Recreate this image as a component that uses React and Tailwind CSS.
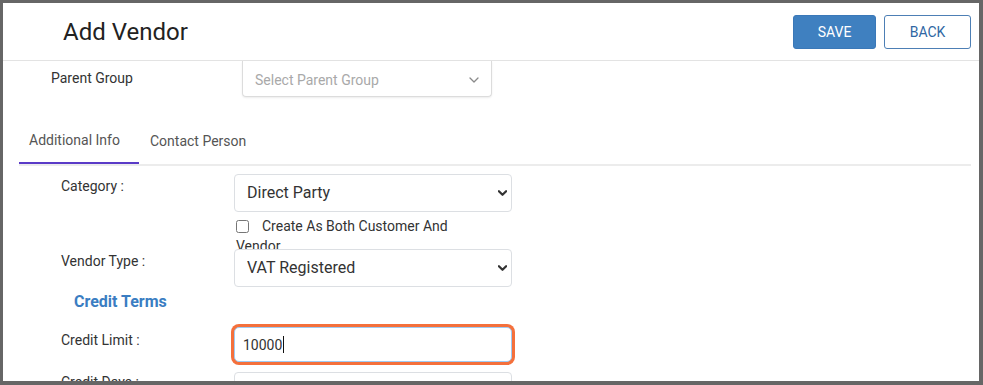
import React from 'react';

// ── Small pieces ────────────────────────────────────────────
function Chevron({ className, strokeWidth = 2.5 }) {
  return (
    <svg
      className={className}
      viewBox="0 0 10 6"
      fill="none"
      stroke="currentColor"
      strokeWidth={strokeWidth}
      strokeLinecap="round"
      strokeLinejoin="round"
    >
      <polyline points="1 1 5 5 9 1" />
    </svg>
  );
}

function SelectField({ value, options }) {
  return (
    <div className="relative w-[278px] h-[38px]">
      <select
        defaultValue={value}
        className="appearance-none w-full h-full rounded-[4px] border border-[#dcdfe3] bg-white pl-[12px] pr-[28px] text-[16px] text-[#333] outline-none"
      >
        {options.map((o) => (
          <option key={o}>{o}</option>
        ))}
      </select>
      <Chevron className="pointer-events-none absolute right-[5px] top-[16px] w-[9px] h-[6px] text-[#333]" />
    </div>
  );
}

function Row({ label, labelClass = 'pt-[2px]', children, className = '' }) {
  return (
    <div className={`flex items-start ${className}`}>
      <div className={`w-[173px] text-sm leading-[20px] text-[#333] ${labelClass}`}>{label}</div>
      {children}
    </div>
  );
}

// ── Page ────────────────────────────────────────────────────
export default function App() {
  return (
    <div className="w-[983px] h-[385px] overflow-hidden bg-[#666] pt-[3px] pl-[3px] pr-[4px] pb-[4px]">
      <div className="h-full overflow-hidden bg-white font-['Roboto',sans-serif]">
        {/* Header */}
        <div className="flex h-[58px] items-center justify-between border-b border-[#e3e3e3] pl-[60px] pr-[8px]">
          <h1 className="text-[24px] leading-none text-[#222]">Add Vendor</h1>
          <div className="flex gap-[8px]">
            <button className="h-[34px] w-[83px] rounded-[3px] border border-[#3a78b8] bg-[#3f80c0] text-sm text-white">
              SAVE
            </button>
            <button className="h-[34px] w-[87px] rounded-[3px] border border-[#4d7fb5] bg-white text-sm text-[#2f67a3]">
              BACK
            </button>
          </div>
        </div>

        {/* Parent group */}
        <div className="flex items-start pl-[48px]">
          <div className="w-[191px] pt-[7px] text-sm leading-[20px] text-[#333]">Parent Group</div>
          <div className="flex h-[36px] w-[250px] items-center justify-between rounded-b-[4px] border border-t-0 border-[#dcdcdc] pl-[12px] pr-[12px] pt-[2px] shadow-[0_1px_2px_rgba(0,0,0,0.08)]">
            <span className="text-sm text-[#a9a9a9]">Select Parent Group</span>
            <Chevron className="w-[10px] h-[6px] text-[#8a8a8a]" strokeWidth={1.3} />
          </div>
        </div>

        {/* Tabs */}
        <div className="ml-[16px] mr-[8px] mt-[17px] flex border-b-2 border-[#ececec]">
          <div className="-mb-[2px] flex h-[50px] w-[120px] items-center border-b-2 border-[#5a3bc7] px-[10px] pt-[4px] text-sm text-[#555]">
            Additional Info
          </div>
          <div className="ml-[11px] flex h-[50px] items-center pt-[4px] text-sm text-[#555]">Contact Person</div>
        </div>

        {/* Form */}
        <div className="mt-[8px] pl-[58px]">
          <Row label="Category :">
            <SelectField value="Direct Party" options={['Direct Party', 'Indirect Party']} />
          </Row>

          <div className="ml-[173px] h-[37px] w-[230px] pl-[2px] pt-[4px] text-sm leading-[20px] text-[#333]">
            <input type="checkbox" className="mr-[13px] h-[13px] w-[13px] align-middle -mt-[2px]" />
            Create As Both Customer And Vendor
          </div>

          <Row label="Vendor Type :" className="relative">
            <SelectField value="VAT Registered" options={['VAT Registered', 'Non VAT']} />
          </Row>

          <div className="mt-[5px] pl-[13px] text-[16px] font-bold leading-[20px] text-[#3a7dc2]">Credit Terms</div>

          <Row label="Credit Limit :" labelClass="pt-[3px]" className="mt-[15px]">
            <div className="flex h-[35px] w-[278px] items-center rounded-[5px] border border-[#9fcbf3] bg-white pl-[8px] text-sm text-[#333] shadow-[0_0_0_3px_#f4703c]">
              10000
              <span className="ml-[1px] h-[17px] w-[1px] bg-[#111]" />
            </div>
          </Row>

          <Row label="Credit Days :" labelClass="pt-0" className="mt-[10px]">
            <div className="h-[35px] w-[278px] rounded-[4px] border border-[#dcdfe3] bg-white" />
          </Row>
        </div>
      </div>
    </div>
  );
}
